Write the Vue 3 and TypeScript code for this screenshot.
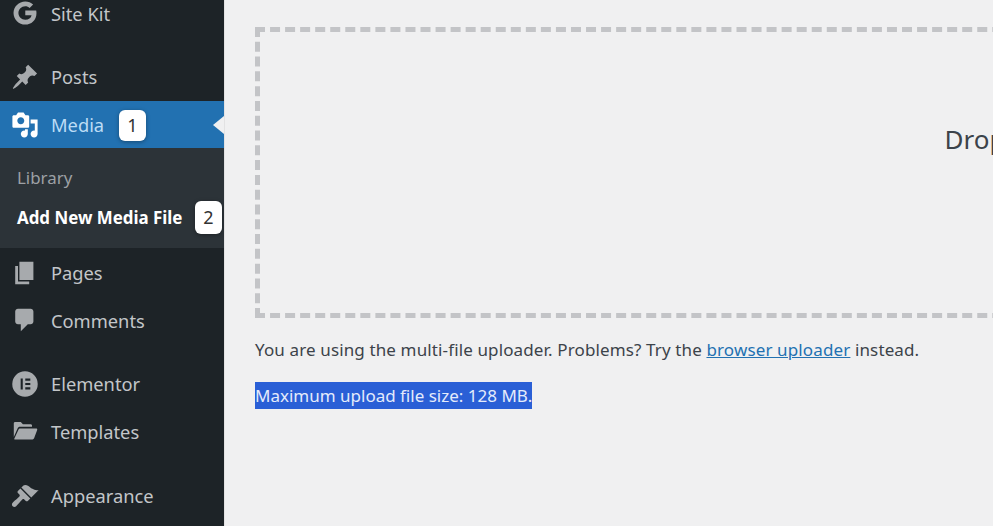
<script setup lang="ts">
interface MenuItem {
  label: string;
  icon: string;
  gapBefore?: boolean;
}

const topItems: MenuItem[] = [
  { label: "Site Kit", icon: "google" },
  { label: "Posts", icon: "post", gapBefore: true },
];

const bottomItems: MenuItem[] = [
  { label: "Pages", icon: "page" },
  { label: "Comments", icon: "comment" },
  { label: "Elementor", icon: "elementor", gapBefore: true },
  { label: "Templates", icon: "folder" },
  { label: "Appearance", icon: "brush", gapBefore: true },
];

const iconPaths: Record<string, string> = {
  google:
    "M10.2 8.3v3.300h4.500c-.4 2-2.100 3.200-4.500 3.200-2.700 0-4.900-2.200-4.900-4.800s2.200-4.800 4.900-4.800c1.200 0 2.300.4 3.100 1.200l2.500-2.500C14.300 2.500 12.400 1.700 10.200 1.700 5.600 1.700 1.800 5.400 1.800 10s3.800 8.300 8.400 8.300c4.200 0 8-3 8-8.300 0-.6-.1-1.200-.2-1.700z",
  post:
    "M10.44 3.02l1.82-1.82 6.360 6.350-1.830 1.820c-1.050-.68-2.480-.57-3.410.36l-.75.75c-.92.93-1.040 2.350-.35 3.410l-1.830 1.820-2.410-2.410-2.800 2.790c-.42.42-3.380 2.710-3.800 2.290s1.860-3.390 2.280-3.810l2.790-2.790L4.100 9.360l1.830-1.820c1.050.69 2.480.57 3.400-.36l.75-.75c.93-.92 1.050-2.350.36-3.410z",
  media:
    "M13 11V4c0-.55-.45-1-1-1h-1.670L9 1H5L3.670 3H2c-.55 0-1 .45-1 1v7c0 .55.45 1 1 1h10c.55 0 1-.45 1-1zM7 4.500c1.380 0 2.500 1.120 2.500 2.500S8.380 9.500 7 9.500 4.500 8.380 4.500 7 5.620 4.500 7 4.500zM14 6h5v10.500c0 1.380-1.120 2.500-2.500 2.500S14 17.880 14 16.500s1.120-2.500 2.500-2.500c.17 0 .34.02.5.05V9h-3V6zm-4 8.050V13h2v3.500c0 1.380-1.120 2.500-2.500 2.500S7 17.880 7 16.500 8.120 14 9.500 14c.17 0 .34.02.5.05z",
  page: "M6 15V2h10v13H6zm-1 1h8v2H3V5h2v11z",
  comment:
    "M5 2h9c1.100 0 2 .9 2 2v7c0 1.100-.9 2-2 2h-2l-5 5v-5H5c-1.100 0-2-.9-2-2V4c0-1.100.9-2 2-2z",
  elementor:
    "M10 .9a9.100 9.100 0 1 0 0 18.200A9.100 9.100 0 0 0 10 .9zM6.900 6.100h1.500v7.800H6.900zm3.300 0h3.600v1.500h-3.600zm0 3.150h3.600v1.500h-3.600zm0 3.150h3.600v1.500h-3.600z",
  folder:
    "M2 4.500c0-.6.4-1 1-1h4l1.500 1.600H14c.6 0 1 .4 1 1V7H6.500c-.9 0-1.500.4-1.800 1.200L2 14.200zM6.300 8.200H18c.6 0 .9.5.7 1l-2.200 6c-.2.5-.6.800-1.100.800H2.900c-.5 0-.7-.3-.5-.7l3-6.300c.2-.5.5-.8.9-.8z",
  brush:
    "M14.480 11.060L7.410 3.990l1.500-1.500c.5-.56 2.300-.47 3.510.32 1.210.8 1.430 1.280 2.910 2.100 1.180.64 2.450 1.260 4.450.85zm-.71.71L6.700 4.700 4.930 6.470c-.39.39-.39 1.020 0 1.410l1.060 1.060c.39.39.39 1.030 0 1.420-.6.6-4.300 3.900-4.800 4.400-.7.7-.7 1.800 0 2.500s1.800.7 2.500 0c.5-.5 3.800-4.200 4.400-4.800.39-.39 1.030-.39 1.420 0l1.060 1.060c.39.39 1.020.39 1.410 0z",
};
</script>

<template>
  <div class="page">
    <aside class="sidebar">
      <ul class="menu">
        <li
          v-for="item in topItems"
          :key="item.label"
          class="menu-item"
          :class="{ spaced: item.gapBefore }"
        >
          <svg class="menu-icon" viewBox="0 0 20 20"><path :d="iconPaths[item.icon]" /></svg>
          <span>{{ item.label }}</span>
        </li>
        <li class="menu-item current">
          <svg class="menu-icon" viewBox="0 0 20 20"><path :d="iconPaths.media" /></svg>
          <span>Media</span>
          <span class="badge badge-one">1</span>
          <span class="arrow"></span>
        </li>
        <li class="submenu">
          <div class="sub-link">Library</div>
          <div class="sub-link active">
            Add New Media File
            <span class="badge badge-two">2</span>
          </div>
        </li>
        <li
          v-for="item in bottomItems"
          :key="item.label"
          class="menu-item"
          :class="{ spaced: item.gapBefore }"
        >
          <svg class="menu-icon" viewBox="0 0 20 20"><path :d="iconPaths[item.icon]" /></svg>
          <span>{{ item.label }}</span>
        </li>
      </ul>
    </aside>

    <main class="content">
      <div class="dropzone">
        <div class="drop-text">Drop files to upload</div>
      </div>
      <p class="note">
        You are using the multi-file uploader. Problems? Try the
        <a class="link">browser uploader</a> instead.
      </p>
      <p class="limit"><span class="selected">Maximum upload file size: 128 MB.</span></p>
    </main>
  </div>
</template>

<style>
html,
body {
  margin: 0;
  overflow: hidden;
}
</style>

<style scoped>
.page {
  display: flex;
  width: 993px;
  height: 526px;
  overflow: hidden;
  background: #f0f0f1;
  font-family: "Noto Sans", "Open Sans", sans-serif;
  color: #3c434a;
}

.sidebar {
  flex: 0 0 224px;
  height: 526px;
  background: #1d2327;
  border-right: 1px solid #e2e2e3;
  overflow: hidden;
}

.menu {
  list-style: none;
  margin: -10.5px 0 0;
  padding: 0;
}

.menu-item {
  position: relative;
  display: flex;
  align-items: center;
  height: 47.5px;
  padding-left: 11px;
  gap: 12px;
  font-size: 18.3px;
  color: #c3c6c9;
}

.menu-item.spaced {
  margin-top: 16px;
}

.menu-item.spaced:last-child {
  margin-top: 17px;
}

.menu-icon {
  flex: 0 0 28px;
  width: 28px;
  height: 28px;
  fill: #a7aaad;
}

.current {
  height: 47px;
  margin-top: 0.5px;
  background: #2271b1;
  color: #bcdcf5;
}

.current .menu-icon {
  fill: #fff;
}

.arrow {
  position: absolute;
  right: 0;
  top: 50%;
  margin-top: -9px;
  border: 9px solid transparent;
  border-left-width: 0;
  border-right: 11px solid #f0f0f1;
}

.submenu {
  height: 100px;
  padding-top: 10px;
  box-sizing: border-box;
  margin-bottom: 1px;
  background: #2c3338;
}

.sub-link {
  position: relative;
  height: 40px;
  line-height: 40px;
  padding-left: 17px;
  font-size: 16.9px;
  color: #9da1a5;
}

.sub-link.active {
  font-weight: 700;
  color: #fff;
}

.badge {
  position: absolute;
  box-sizing: border-box;
  width: 27px;
  height: 31px;
  line-height: 31px;
  text-align: center;
  border-radius: 6px;
  background: #fff;
  color: #333;
  font-size: 18px;
  font-weight: 400;
  box-shadow: 0 1px 4px rgba(0, 0, 0, 0.35);
}

.badge-one {
  left: 119px;
  top: 9px;
}

.badge-two {
  left: 195px;
  top: 3px;
  height: 33px;
  line-height: 33px;
}

.content {
  flex: 1;
  min-width: 0;
  padding: 27px 0 0 30px;
}

.dropzone {
  display: flex;
  align-items: center;
  justify-content: center;
  box-sizing: border-box;
  width: 1620px;
  height: 291px;
  border: 5px dashed #c3c4c7;
}

.drop-text {
  margin-bottom: 68px;
  font-size: 26px;
  line-height: 36px;
  white-space: nowrap;
}

.note,
.limit {
  margin: 0;
  font-size: 17px;
  line-height: 24px;
  white-space: nowrap;
}

.note {
  margin-top: 20px;
  letter-spacing: 0.13px;
}

.limit {
  margin-top: 22px;
}

.link {
  color: #2271b1;
  text-decoration: underline;
}

.selected {
  padding: 2px 0;
  background: #2a5fd6;
  color: #e4ebfb;
}
</style>
